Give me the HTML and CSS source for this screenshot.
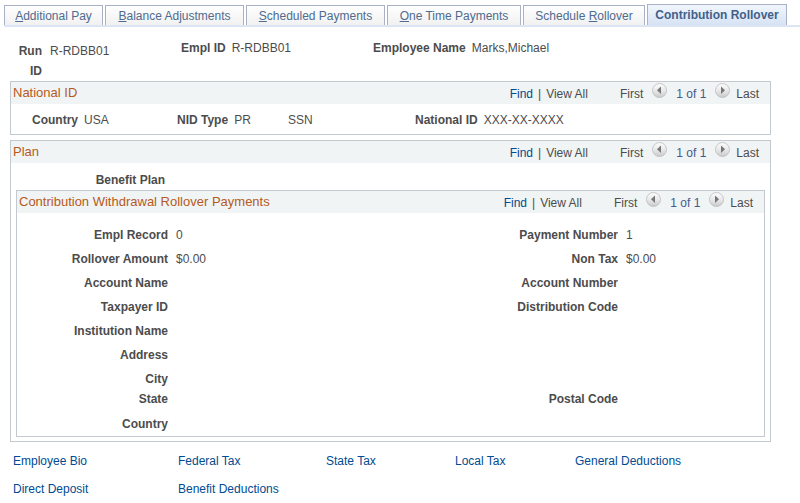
FILE: index.html
```html
<!DOCTYPE html>
<html lang="en">
<head>
  <meta charset="UTF-8" />
  <meta name="viewport" content="width=device-width, initial-scale=1.0" />
  <title>Contribution Rollover</title>
  <link rel="stylesheet" href="styles.css">
</head>
<body>
  <svg class="defs" width="0" height="0">
    <defs>
      <linearGradient id="ball" x1="0" y1="0" x2="0" y2="1">
        <stop offset="0" stop-color="#fdfdfd" />
        <stop offset="0.5" stop-color="#e9e9e9" />
        <stop offset="1" stop-color="#c9c9c9" />
      </linearGradient>
      <symbol id="prev" viewBox="0 0 15 15">
        <circle cx="7.5" cy="7.5" r="7" fill="url(#ball)" stroke="#b9bcbd" stroke-width="0.8" />
        <path d="M9 3.5v7.5L5 7.2z" fill="#777" />
      </symbol>
      <symbol id="next" viewBox="0 0 15 15">
        <circle cx="7.5" cy="7.5" r="7" fill="url(#ball)" stroke="#b9bcbd" stroke-width="0.8" />
        <path d="M6 3.5v7.5l4-3.8z" fill="#777" />
      </symbol>
    </defs>
  </svg>

  <nav class="tabs">
    <a class="tab" href="#"><u>A</u>dditional Pay</a>
    <a class="tab" href="#"><u>B</u>alance Adjustments</a>
    <a class="tab" href="#"><u>S</u>cheduled Payments</a>
    <a class="tab" href="#"><u>O</u>ne Time Payments</a>
    <a class="tab" href="#">Schedule <u>R</u>ollover</a>
    <a class="tab active" href="#" aria-current="page">Contribution Rollover</a>
  </nav>

  <main>
    <div class="employee">
      <div class="field run"><b>Run ID</b><span>R-RDBB01</span></div>
      <div class="field"><b>Empl ID</b><span>R-RDBB01</span></div>
      <div class="field"><b>Employee Name</b><span>Marks,Michael</span></div>
    </div>

    <section class="panel">
      <header class="bar">
        <h2>National ID</h2>
        <div class="pager">
          <a href="#">Find</a><span class="sep">|</span><span class="view">View All</span>
          <span class="first">First</span>
          <button aria-label="Previous"><svg><use href="#prev" /></svg></button>
          <span class="count">1 of 1</span>
          <button aria-label="Next"><svg><use href="#next" /></svg></button>
          <span class="last">Last</span>
        </div>
      </header>
      <div class="national">
        <div class="field"><b>Country</b><span>USA</span></div>
        <div class="field"><b>NID Type</b><span>PR</span></div>
        <span>SSN</span>
        <div class="field"><b>National ID</b><span>XXX-XX-XXXX</span></div>
      </div>
    </section>

    <section class="panel plan">
      <header class="bar">
        <h2>Plan</h2>
        <div class="pager">
          <a href="#">Find</a><span class="sep">|</span><span class="view">View All</span>
          <span class="first">First</span>
          <button aria-label="Previous"><svg><use href="#prev" /></svg></button>
          <span class="count">1 of 1</span>
          <button aria-label="Next"><svg><use href="#next" /></svg></button>
          <span class="last">Last</span>
        </div>
      </header>
      <div class="benefit"><b>Benefit Plan</b></div>

      <section class="panel inner">
        <header class="bar">
          <h2>Contribution Withdrawal Rollover Payments</h2>
          <div class="pager">
            <a href="#">Find</a><span class="sep">|</span><span class="view">View All</span>
            <span class="first">First</span>
            <button aria-label="Previous"><svg><use href="#prev" /></svg></button>
            <span class="count">1 of 1</span>
            <button aria-label="Next"><svg><use href="#next" /></svg></button>
            <span class="last">Last</span>
          </div>
        </header>
        <div class="details">
          <b>Empl Record</b><span>0</span><b>Payment Number</b><span>1</span>
          <b>Rollover Amount</b><span>$0.00</span><b>Non Tax</b><span>$0.00</span>
          <b>Account Name</b><span></span><b>Account Number</b><span></span>
          <b>Taxpayer ID</b><span></span><b>Distribution Code</b><span></span>
          <b class="start">Institution Name</b>
          <b class="start">Address</b>
          <b class="start">City</b>
          <b class="start tight">State</b><span class="tight"></span><b class="tight">Postal Code</b>
          <b class="start">Country</b>
        </div>
      </section>
    </section>

    <nav class="links">
      <a href="#">Employee Bio</a>
      <a href="#">Federal Tax</a>
      <a href="#">State Tax</a>
      <a href="#">Local Tax</a>
      <a href="#">General Deductions</a>
      <a href="#">Direct Deposit</a>
      <a href="#">Benefit Deductions</a>
    </nav>
  </main>
</body>
</html>
```

FILE: styles.css
```css
* {
  margin: 0;
  padding: 0;
  box-sizing: border-box;
}
body {
  background: #fff;
  color: #4c4c4c;
  font-family: "Liberation Sans", Arial, sans-serif;
  font-size: 12px;
  line-height: 20px;
}
a {
  color: #004b91;
  text-decoration: none;
}
.defs {
  position: absolute;
}

/* Tabs */
.tabs {
  display: grid;
  grid-template-columns: 99px 139px 139px 134px 122px 140px;
  align-items: end;
  gap: 2px;
  margin-left: 4px;
  padding-top: 4px;
  border-bottom: 2px solid #dbe5f4;
}
.tab {
  height: 20px;
  border: 1px solid #a9b1c6;
  border-bottom: none;
  background: linear-gradient(#fff, #f1f1f1);
  color: #4f6b8f;
  text-align: center;
  white-space: nowrap;
}
.tab.active {
  height: 21px;
  background: linear-gradient(#f1f6fd, #d6e2f3);
  color: #41618a;
  font-weight: bold;
}

main {
  margin: 0 29px 0 10px;
}
.field {
  display: flex;
  gap: 6px;
}

/* Employee summary */
.employee {
  display: grid;
  grid-template-columns: 171px 192px 1fr;
  padding-top: 11px;
}
.run {
  gap: 8px;
  padding-top: 3px;
}
.run b {
  width: 32px;
  text-align: right;
}

/* Group boxes */
.panel {
  border: 1px solid #c4c8cf;
}
.bar {
  display: flex;
  justify-content: space-between;
  height: 22px;
  padding: 0 11px 0 2px;
  background: #f0f4f5;
  line-height: 22px;
}
.bar h2 {
  color: #b65a1c;
  font-size: 13px;
  font-weight: normal;
}
.pager {
  display: flex;
  padding-top: 1px;
}
.sep {
  margin: 0 5px;
}
.first {
  margin-left: 32px;
}
.pager button {
  display: flex;
  width: 15px;
  height: 15px;
  margin: 0 9px;
  border: none;
  background: none;
  cursor: pointer;
}
.pager button svg {
  width: 15px;
  height: 15px;
}
.count {
  color: #46598c;
}
.pager .last {
  margin-left: -3px;
}
.national {
  display: grid;
  grid-template-columns: 145px 111px 127px 1fr;
  padding: 6px 0 4px 21px;
}

.plan {
  margin-top: 5px;
  padding-bottom: 4px;
}
.benefit {
  width: 154px;
  padding-top: 7px;
  text-align: right;
}
.inner {
  margin: 0 5px;
}
.details {
  display: grid;
  grid-template-columns: 151px 1fr 120px 138px;
  align-items: start;
  column-gap: 8px;
  padding-top: 10px;
  line-height: 24px;
}
.details b {
  text-align: right;
}
.start {
  grid-column: 1;
}
.tight {
  padding-bottom: 5px;
  line-height: 16px;
}

/* Footer links */
.links {
  display: grid;
  grid-template-columns: 165px 148px 129px 120px 1fr;
  row-gap: 8px;
  padding: 9px 0 0 3px;
}
```
